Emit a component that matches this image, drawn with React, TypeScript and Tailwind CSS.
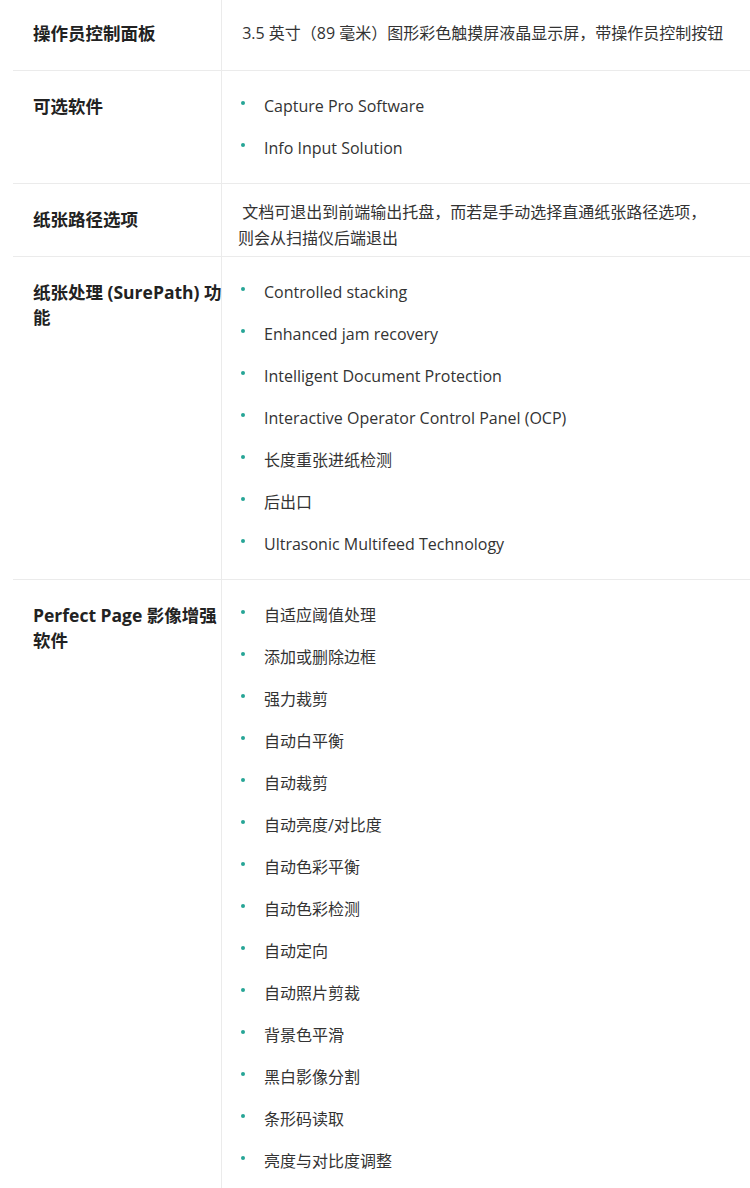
import React from "react";

type Row = {
  title: string;
  text?: React.ReactNode;
  items?: string[];
  textClass?: string;
};

const rows: Row[] = [
  {
    title: "操作员控制面板",
    text: "\u00a03.5 英寸（89 毫米）图形彩色触摸屏液晶显示屏，带操作员控制按钮",
  },
  {
    title: "可选软件",
    items: ["Capture Pro Software", "Info Input Solution"],
  },
  {
    title: "纸张路径选项",
    text: (
      <>
        {"\u00a0"}文档可退出到前端输出托盘，而若是手动选择直通纸张路径选项，
        <br />
        则会从扫描仪后端退出
      </>
    ),
    textClass: "pt-[15px] pb-[5px]",
  },
  {
    title: "纸张处理 (SurePath) 功能",
    items: [
      "Controlled stacking",
      "Enhanced jam recovery",
      "Intelligent Document Protection",
      "Interactive Operator Control Panel (OCP)",
      "长度重张进纸检测",
      "后出口",
      "Ultrasonic Multifeed Technology",
    ],
  },
  {
    title: "Perfect Page 影像增强软件",
    items: [
      "自适应阈值处理",
      "添加或删除边框",
      "强力裁剪",
      "自动白平衡",
      "自动裁剪",
      "自动亮度/对比度",
      "自动色彩平衡",
      "自动色彩检测",
      "自动定向",
      "自动照片剪裁",
      "背景色平滑",
      "黑白影像分割",
      "条形码读取",
      "亮度与对比度调整",
    ],
  },
];

function SpecRow({ row }: { row: Row }) {
  return (
    <div className="flex border-b border-[#ebebeb]">
      <div className="w-[209px] shrink-0 border-r border-[#ebebeb] pl-[20px] pt-[23px] pb-[24px]">
        <div className="w-[196px] text-[17.5px] font-bold leading-[25px] text-[#222]">
          {row.title}
        </div>
      </div>
      <div className="flex-1 pl-[16px] pr-4">
        {row.items ? (
          <ul className="flex flex-col gap-4 py-[22px]">
            {row.items.map((it) => (
              <li key={it} className="flex items-start text-[16px] leading-[26px] text-[#333]">
                <span className="w-[26px] shrink-0 pl-[3px] pt-[8px]">
                  <span className="block h-[4px] w-[4px] rounded-full bg-[#26a596]" />
                </span>
                <span>{it}</span>
              </li>
            ))}
          </ul>
        ) : (
          <p className={`text-[16px] leading-[26px] text-[#333] ${row.textClass ?? "py-[22px]"}`}>
            {row.text}
          </p>
        )}
      </div>
    </div>
  );
}

export default function App() {
  return (
    <div
      className="min-h-[1188px] overflow-hidden bg-white"
      style={{ fontFamily: '"Open Sans", "Noto Sans CJK SC", sans-serif' }}
    >
      <div className="-mt-[2px] ml-[13px]">
        {rows.map((r) => (
          <SpecRow key={r.title} row={r} />
        ))}
      </div>
    </div>
  );
}
